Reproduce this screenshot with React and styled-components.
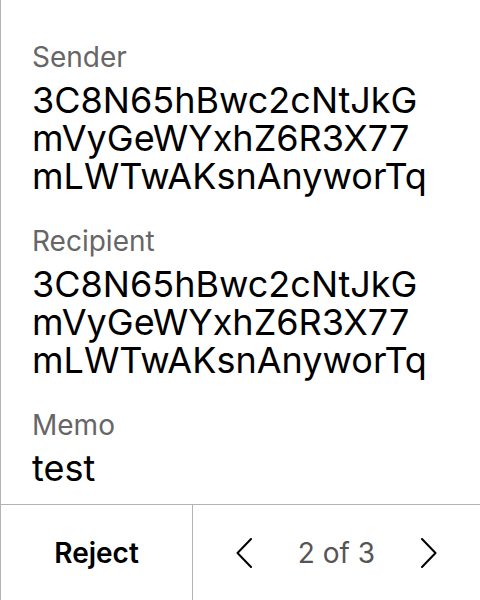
import React from 'react';
import styled, { createGlobalStyle } from 'styled-components';

const GlobalStyle = createGlobalStyle`
  html, body {
    margin: 0;
    padding: 0;
    background: #fff;
  }
  body {
    font-family: Inter, "Noto Sans", sans-serif;
  }
`;

const Screen = styled.div`
  width: 480px;
  height: 600px;
  box-sizing: border-box;
  border-left: 1px solid #b3b3b3;
  display: flex;
  flex-direction: column;
  overflow: hidden;
`;

const Details = styled.div`
  flex: 1;
  padding: 40px 0 0 31px;
  display: flex;
  flex-direction: column;
  gap: 29px;
`;

const Field = styled.div`
  display: flex;
  flex-direction: column;
`;

const Label = styled.div`
  font-size: 28px;
  line-height: 34px;
  margin-bottom: 7px;
  color: #666;
`;

const Value = styled.div`
  font-size: 36px;
  line-height: 38px;
  color: #000;
  white-space: nowrap;
`;

const Footer = styled.div`
  height: 96px;
  box-sizing: border-box;
  border-top: 1px solid #b3b3b3;
  display: grid;
  grid-template-columns: 192px 1fr;
`;

const RejectButton = styled.button`
  border: none;
  border-right: 1px solid #b3b3b3;
  background: none;
  font-family: inherit;
  font-size: 28px;
  font-weight: 600;
  color: #000;
  padding: 0;
  cursor: pointer;
`;

const Pager = styled.div`
  display: flex;
  align-items: center;
  justify-content: center;
  gap: 46px;
`;

const PageText = styled.span`
  font-size: 28px;
  color: #555;
`;

const Arrow = styled.button`
  border: none;
  background: none;
  padding: 0;
  display: flex;
  cursor: pointer;
`;

const Chevron = ({ dir }) => (
  <svg width="16" height="30" viewBox="0 0 16 30" fill="none">
    <path
      d={dir === 'left' ? 'M15 1 L1.5 15 L15 29' : 'M1 1 L14.5 15 L1 29'}
      stroke="#000"
      strokeWidth="2"
      strokeLinecap="round"
      strokeLinejoin="round"
    />
  </svg>
);

const address = ['3C8N65hBwc2cNtJkG', 'mVyGeWYxhZ6R3X77', 'mLWTwAKsnAnyworTq'];

const App = () => {
  return (
    <>
      <GlobalStyle />
      <Screen>
        <Details>
          <Field>
            <Label>Sender</Label>
            <Value>
              {address.map((l) => (
                <div key={l}>{l}</div>
              ))}
            </Value>
          </Field>
          <Field>
            <Label>Recipient</Label>
            <Value>
              {address.map((l) => (
                <div key={l}>{l}</div>
              ))}
            </Value>
          </Field>
          <Field>
            <Label>Memo</Label>
            <Value>test</Value>
          </Field>
        </Details>
        <Footer>
          <RejectButton>Reject</RejectButton>
          <Pager>
            <Arrow>
              <Chevron dir="left" />
            </Arrow>
            <PageText>2 of 3</PageText>
            <Arrow>
              <Chevron dir="right" />
            </Arrow>
          </Pager>
        </Footer>
      </Screen>
    </>
  );
};

export default App;
